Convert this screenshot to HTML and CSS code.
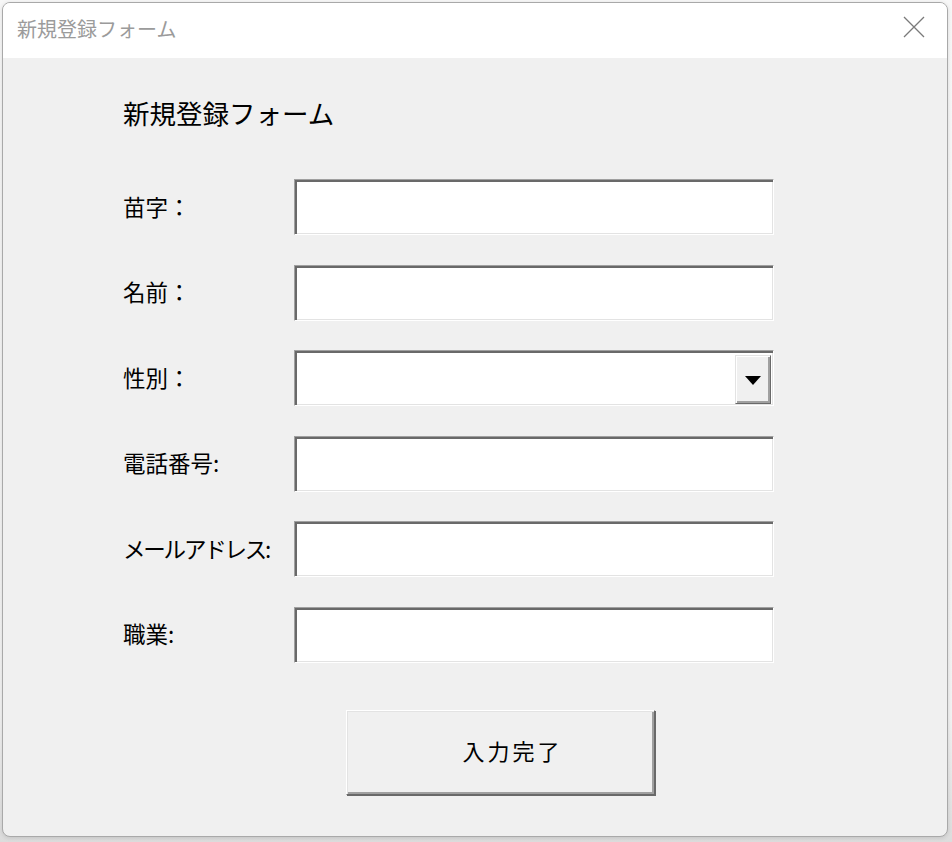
FILE: index.html
```html
<!DOCTYPE html>
<html lang="ja">
<head>
<meta charset="utf-8">
<title>新規登録フォーム</title>
<link rel="stylesheet" href="styles.css">
</head>
<body>
<div class="window">
  <div class="titlebar">
    <span class="title">新規登録フォーム</span>
    <svg class="close" width="22" height="22" viewBox="0 0 22 22"><path d="M1 1 L21 21 M21 1 L1 21" stroke="#7a7a7a" stroke-width="1.3" fill="none"/></svg>
  </div>
  <div class="client">
    <h1 class="heading">新規登録フォーム</h1>
    <div class="form">
      <div class="row"><span class="label">苗字：</span><div class="field"></div></div>
      <div class="row"><span class="label">名前：</span><div class="field"></div></div>
      <div class="row"><span class="label">性別：</span><div class="field combo"><div class="dropbtn"><span class="arrow"></span></div></div></div>
      <div class="row"><span class="label">電話番号:</span><div class="field"></div></div>
      <div class="row"><span class="label narrow">メールアドレス:</span><div class="field"></div></div>
      <div class="row"><span class="label">職業:</span><div class="field"></div></div>
    </div>
    <div class="actions"><button class="submit">入力完了</button></div>
  </div>
</div>
</body>
</html>
```
FILE: styles.css
```css
html, body {
  margin: 0;
  padding: 0;
}
body {
  width: 952px;
  height: 842px;
  background: linear-gradient(#f7f7f7, #f2f2f2 85%, #dcdcdc);
  font-family: "Noto Sans CJK JP", "Noto Sans", sans-serif;
  padding: 2px;
  box-sizing: border-box;
  overflow: hidden;
}
.window {
  width: 946px;
  height: 835px;
  box-sizing: border-box;
  border: 1px solid #a9a9a9;
  border-radius: 8px;
  background: #f0f0f0;
  display: flex;
  flex-direction: column;
  overflow: hidden;
  box-shadow: 0 1px 4px rgba(0,0,0,0.12);
}
.titlebar {
  height: 55px;
  flex: none;
  background: #fff;
  display: flex;
  align-items: center;
  justify-content: space-between;
  padding: 0 22px 0 14px;
}
.title {
  color: #9b9b9b;
  font-size: 20px;
  margin-top: -4px;
}
.close {
  display: block;
  margin-top: -8px;
}
.client {
  flex: 1;
  padding: 35px 0 0 120px;
}
.heading {
  margin: 0;
  font-weight: normal;
  font-size: 26.5px;
  line-height: 40px;
  color: #000;
}
.form {
  margin-top: 46px;
  display: flex;
  flex-direction: column;
  gap: 29.6px;
}
.row {
  display: flex;
  align-items: center;
  height: 56px;
}
.label {
  width: 171px;
  flex: none;
  font-size: 22.5px;
  color: #000;
  margin-top: -3px;
}
.label.narrow {
  letter-spacing: -2.2px;
}
.field {
  width: 480px;
  height: 56px;
  box-sizing: border-box;
  background: #fff;
  border: 1px solid;
  border-color: #a0a0a0 #fff #fff #a0a0a0;
  box-shadow: inset 2px 2px 0 #696969, inset -1px -1px 0 #e3e3e3;
  display: flex;
  justify-content: flex-end;
  align-items: center;
  padding: 3px 2px 1px 0;
}
.dropbtn {
  width: 36px;
  height: 49px;
  box-sizing: border-box;
  background: #f0f0f0;
  border: 1px solid;
  border-color: #e3e3e3 #696969 #696969 #e3e3e3;
  box-shadow: inset 1px 1px 0 #fff, inset -2px -2px 0 #a0a0a0;
  display: flex;
  align-items: center;
  justify-content: center;
  margin-top: 1px;
}
.arrow {
  width: 0;
  height: 0;
  border-left: 8px solid transparent;
  border-right: 8px solid transparent;
  border-top: 9px solid #000;
  margin-top: 2px;
}
.actions {
  margin-top: 47px;
  padding-left: 223px;
}
.submit {
  width: 309px;
  height: 85px;
  box-sizing: border-box;
  background: #f0f0f0;
  border: 1px solid;
  border-color: #fff #696969 #696969 #fff;
  box-shadow: inset 1px 1px 0 #e3e3e3, inset -2px -2px 0 #a0a0a0, 1px 1px 0 #696969;
  font-family: "Noto Sans CJK JP", sans-serif;
  font-size: 22px;
  letter-spacing: 3px;
  color: #000;
  padding: 0 0 4px 24px;
}
```
